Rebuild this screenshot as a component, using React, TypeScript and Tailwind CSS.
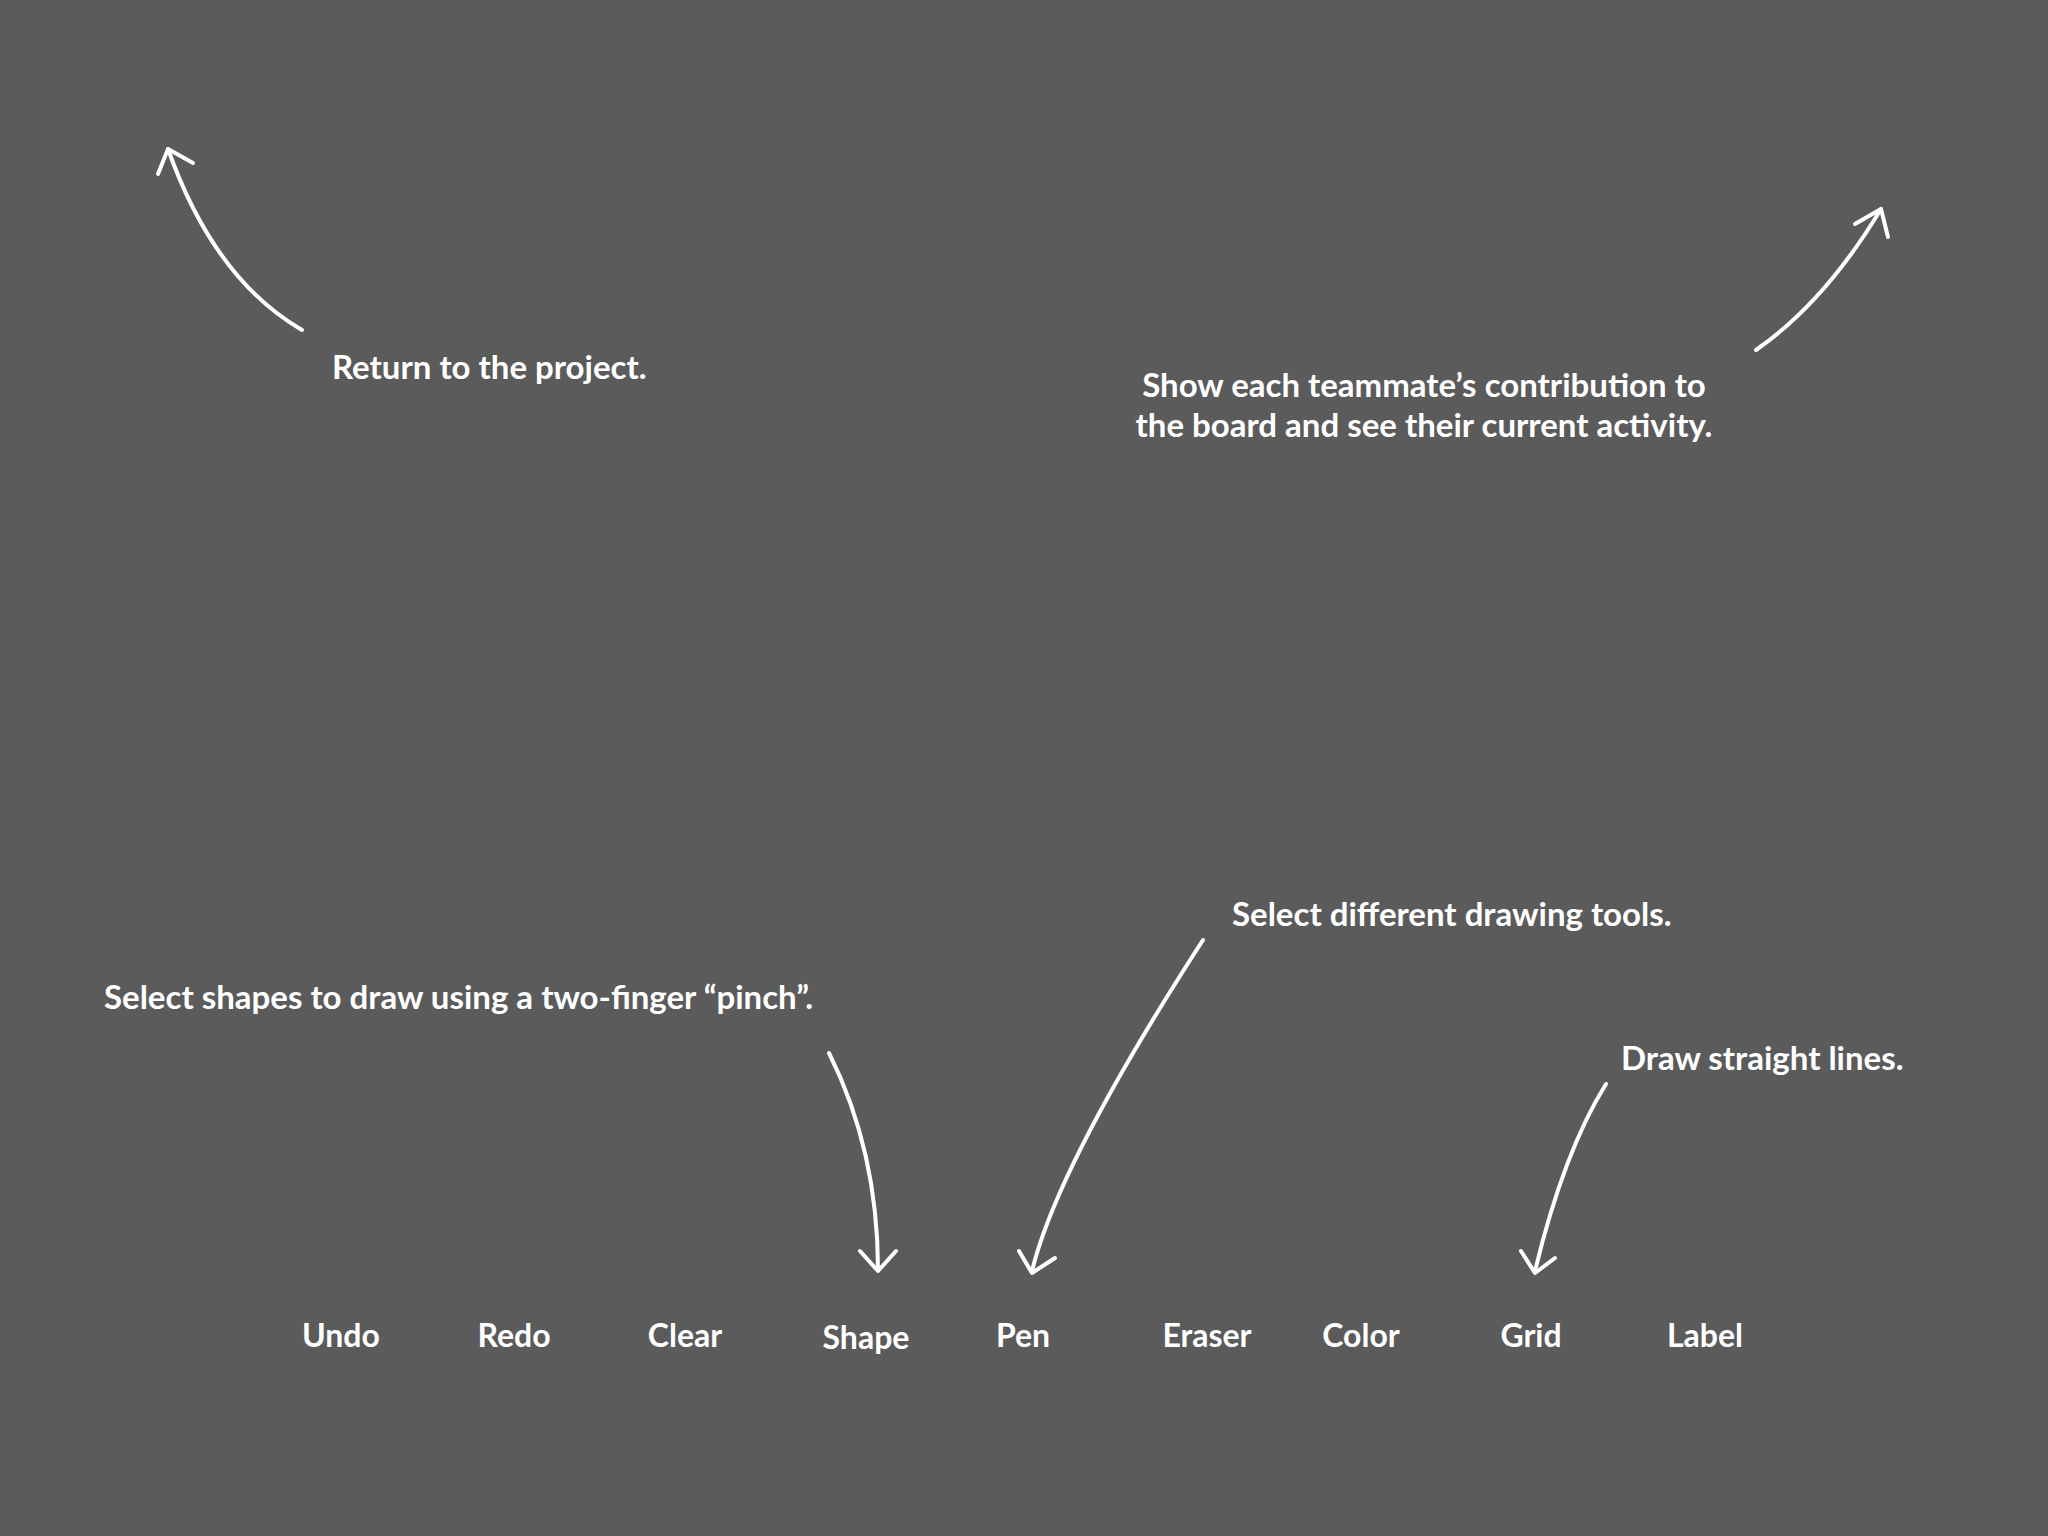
import React from "react";

const labels: { text: string; ml: string }[] = [
  { text: "Undo", ml: "ml-0" },
  { text: "Redo", ml: "ml-[33px]" },
  { text: "Clear", ml: "ml-[31px]" },
  { text: "Shape", ml: "ml-[41px] translate-y-[2px]" },
  { text: "Pen", ml: "ml-[17px]" },
  { text: "Eraser", ml: "ml-[44px]" },
  { text: "Color", ml: "ml-[14px]" },
  { text: "Grid", ml: "ml-[30px]" },
  { text: "Label", ml: "ml-[34px]" },
];

function Arrows() {
  return (
    <svg
      className="absolute inset-0 pointer-events-none"
      width="2048"
      height="1536"
      viewBox="0 0 2048 1536"
      fill="none"
      stroke="white"
      strokeWidth="4"
      strokeLinecap="round"
      strokeLinejoin="round"
    >
      <path d="M302 330 Q214 279 168 149" />
      <path d="M158 174 L168 149 L193 163" />
      <path d="M1756 350 Q1825 302 1881 209" />
      <path d="M1855 224 L1881 209 L1888 237" />
      <path d="M829 1053 Q878 1151 878 1270" />
      <path d="M860 1251 L878 1271 L896 1251" />
      <path d="M1203 940 Q1058 1164 1032 1271" />
      <path d="M1019 1251 L1032 1273 L1055 1258" />
      <path d="M1606 1084 Q1564 1151 1535 1271" />
      <path d="M1521 1251 L1535 1273 L1555 1258" />
    </svg>
  );
}

export default function App() {
  return (
    <div
      className="relative w-full h-[1536px] bg-[#5b5b5b] overflow-hidden text-white flex flex-col justify-end"
      style={{ fontFamily: "Lato, 'Open Sans', sans-serif" }}
    >
      <Arrows />

      <div className="absolute left-[332px] top-[350px] text-[33px] leading-none font-bold whitespace-nowrap">
        Return to the project.
      </div>

      <div className="absolute left-[1114px] top-[364px] w-[620px] text-center text-[33px] leading-[40px] font-bold">
        Show each teammate’s contribution to
        <br />
        the board and see their current activity.
      </div>

      <div className="absolute left-[1232px] top-[897px] text-[33px] leading-none font-bold whitespace-nowrap">
        Select different drawing tools.
      </div>

      <div className="absolute left-[104px] top-[980px] text-[33px] leading-none font-bold whitespace-nowrap">
        Select shapes to draw using a two-finger “pinch”.
      </div>

      <div className="absolute left-[1621px] top-[1041px] text-[33px] leading-none font-bold whitespace-nowrap">
        Draw straight lines.
      </div>

      <div className="flex items-start pl-[271px] pb-[183px]">
        {labels.map((l) => (
          <div
            key={l.text}
            className={`w-[140px] shrink-0 text-center text-[32px] leading-[36px] font-bold ${l.ml}`}
          >
            {l.text}
          </div>
        ))}
      </div>
    </div>
  );
}
